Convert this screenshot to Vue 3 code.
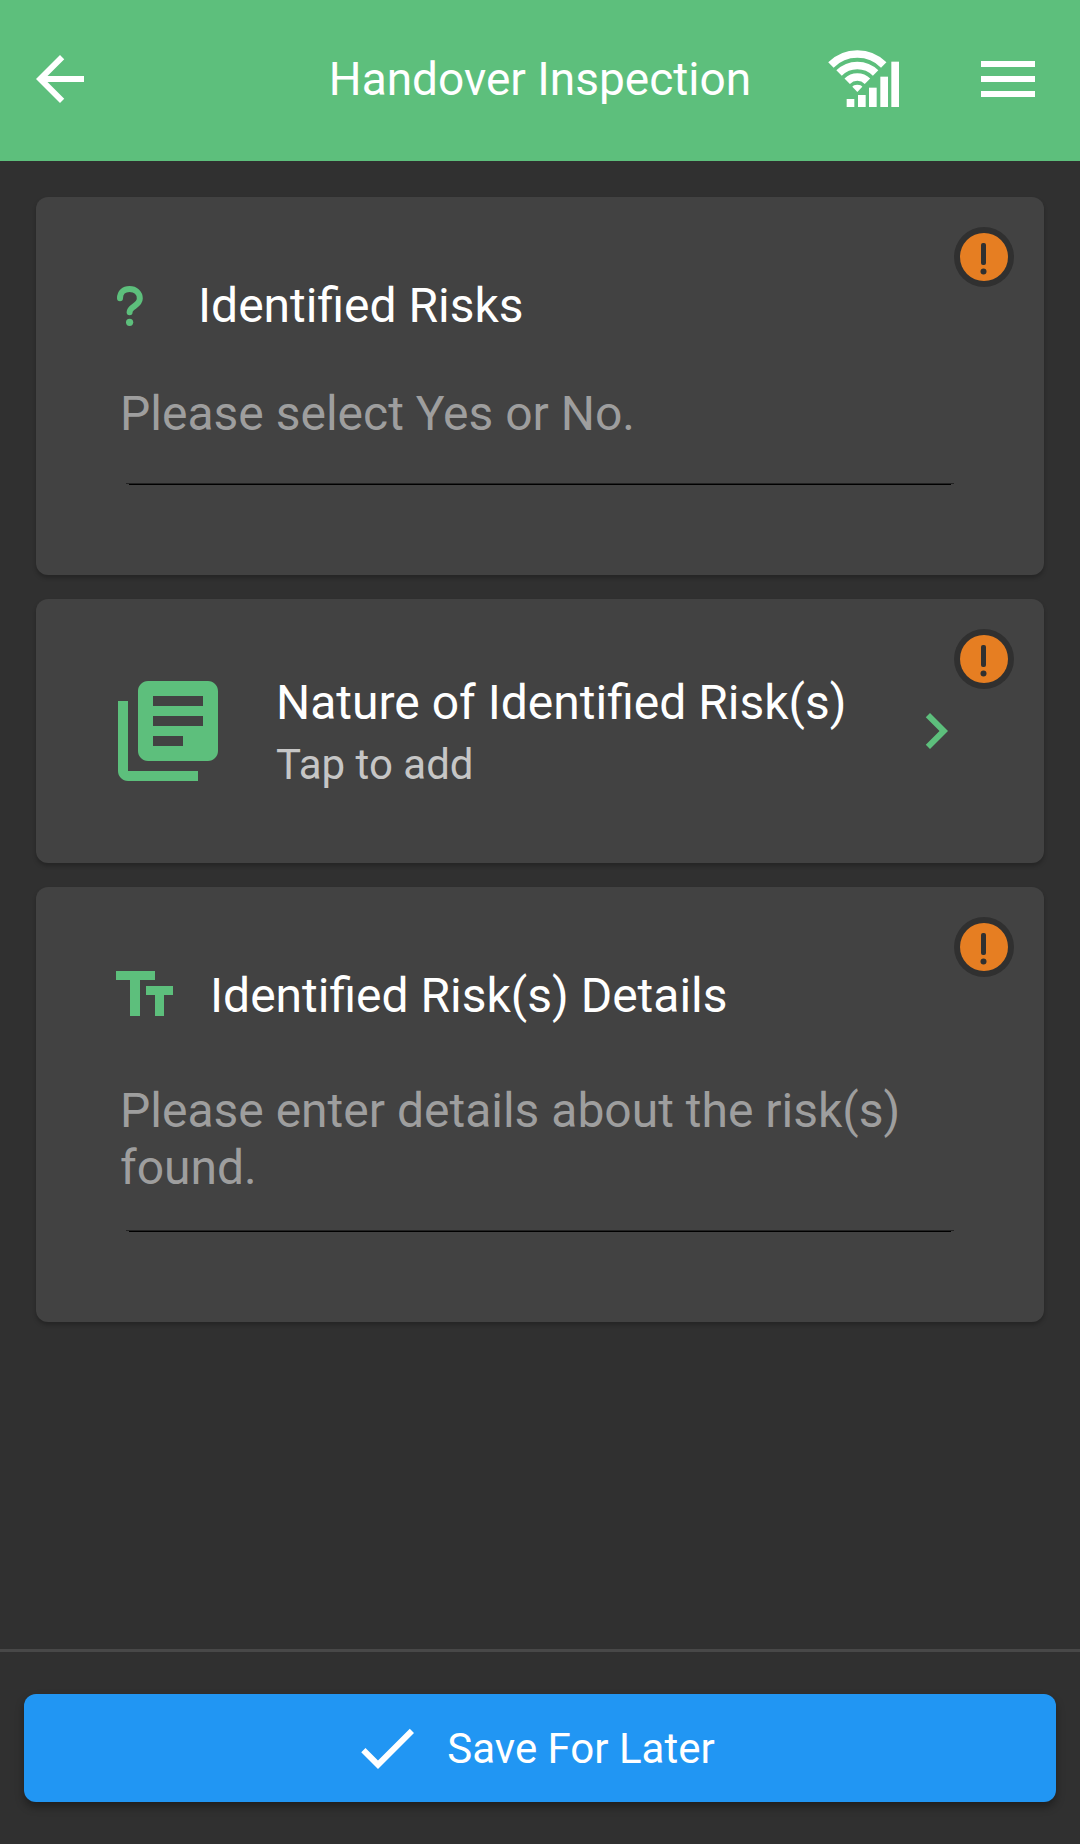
<script setup>
import { ref } from 'vue'

const risks = ref('')
const details = ref('')
</script>

<template>
  <div class="screen">
    <header class="bar">
      <button class="icon-button" type="button" aria-label="Back">
        <svg class="icon" viewBox="0 0 24 24"><path d="M20 11H7.83l5.59-5.59L12 4l-8 8 8 8 1.41-1.41L7.83 13H20v-2z" /></svg>
      </button>
      <h1 class="title">Handover Inspection</h1>
      <div class="actions">
        <svg class="signal" viewBox="25 60 213 177" role="img" aria-label="Signal">
          <g class="arcs">
            <path d="M33.8 104.8A112 112 0 0 1 192.2 104.8" />
            <path d="M58.2 129.2A77.5 77.5 0 0 1 167.8 129.2" />
            <path d="M82.6 153.6A43 43 0 0 1 143.4 153.6" />
          </g>
          <path d="M113 186 98 170Q101 164 113 164T128 170Z" />
          <rect x="81" y="207" width="23" height="24" />
          <rect x="115" y="195" width="23" height="36" />
          <rect x="148" y="173" width="23" height="58" />
          <rect x="182" y="140" width="23" height="91" />
          <rect x="215" y="95" width="23" height="136" />
        </svg>
        <button class="icon-button" type="button" aria-label="Menu">
          <svg class="icon" viewBox="0 0 24 24"><path d="M3 18h18v-2H3v2zm0-5h18v-2H3v2zm0-7v2h18V6H3z" /></svg>
        </button>
      </div>
    </header>

    <main class="list">
      <section class="card">
        <label class="heading" for="risks">
          <svg class="question" viewBox="-1 0 46 40" aria-hidden="true">
            <path class="hook" d="M3 12.300C3 6.500 7 3 12.500 3c6 0 10.300 3.800 10.300 9.600 0 7.200-10.200 7.800-10.200 13.600" />
            <circle cx="12.600" cy="36.300" r="3.600" />
          </svg>
          <span>Identified Risks</span>
        </label>
        <div class="field single">
          <input id="risks" v-model="risks" type="text" placeholder="Please select Yes or No." />
        </div>
        <svg class="badge" viewBox="0 0 60 60" role="img" aria-label="Required">
          <circle class="ring" cx="30" cy="30" r="30" />
          <circle class="disc" cx="30" cy="30" r="24" />
          <rect class="ring" x="27" y="16" width="5" height="22" rx="2" />
          <circle class="ring" cx="29.500" cy="44.500" r="3" />
        </svg>
      </section>

      <section class="card">
        <button class="entry" type="button">
          <svg class="library" viewBox="0 0 24 24" aria-hidden="true">
            <path d="M4 6H2v14c0 1.100.900 2 2 2h14v-2H4V6zm16-4H8c-1.100 0-2 .900-2 2v12c0 1.100.900 2 2 2h12c1.100 0 2-.900 2-2V4c0-1.100-.900-2-2-2zm-1 9H9V9h10v2zm-4 4H9v-2h6v2zm4-8H9V5h10v2z" />
          </svg>
          <span class="texts">
            <span class="name">Nature of Identified Risk(s)</span>
            <span class="hint">Tap to add</span>
          </span>
          <svg class="icon" viewBox="0 0 24 24" aria-hidden="true"><path d="M10 6 8.590 7.410 13.170 12l-4.580 4.590L10 18l6-6z" /></svg>
        </button>
        <svg class="badge" viewBox="0 0 60 60" role="img" aria-label="Required">
          <circle class="ring" cx="30" cy="30" r="30" />
          <circle class="disc" cx="30" cy="30" r="24" />
          <rect class="ring" x="27" y="16" width="5" height="22" rx="2" />
          <circle class="ring" cx="29.500" cy="44.500" r="3" />
        </svg>
      </section>

      <section class="card">
        <label class="heading" for="details">
          <svg class="letters" viewBox="0 0 58 49" aria-hidden="true">
            <rect width="39" height="9" />
            <rect x="14" width="10" height="45" />
            <rect x="30" y="15" width="27" height="9" />
            <rect x="39" y="15" width="9" height="30" />
          </svg>
          <span>Identified Risk(s) Details</span>
        </label>
        <div class="field multi">
          <textarea id="details" v-model="details" rows="2" placeholder="Please enter details about the risk(s) found."></textarea>
        </div>
        <svg class="badge" viewBox="0 0 60 60" role="img" aria-label="Required">
          <circle class="ring" cx="30" cy="30" r="30" />
          <circle class="disc" cx="30" cy="30" r="24" />
          <rect class="ring" x="27" y="16" width="5" height="22" rx="2" />
          <circle class="ring" cx="29.500" cy="44.500" r="3" />
        </svg>
      </section>
    </main>

    <footer class="footer">
      <button class="save" type="button">
        <svg class="icon" viewBox="0 0 24 24" aria-hidden="true"><path d="M9 16.170 4.830 12l-1.420 1.410L9 19 21 7l-1.410-1.410z" /></svg>
        <span>Save For Later</span>
      </button>
    </footer>
  </div>
</template>

<style>
body {
  margin: 0;
  background: #303030;
}
</style>

<style scoped>
.screen {
  display: flex;
  flex-direction: column;
  min-height: 100vh;
  background: #303030;
  color: #fff;
  font-family: Roboto, sans-serif;
  font-size: 48px;
  line-height: 57px;
}
.screen *,
.screen {
  box-sizing: border-box;
}
button {
  border: 0;
  padding: 0;
  background: none;
  color: inherit;
  font: inherit;
  cursor: pointer;
}
svg {
  display: block;
  flex: none;
  fill: currentColor;
}
.icon {
  width: 72px;
  height: 72px;
}
.bar {
  display: grid;
  grid-template-columns: 1fr auto 1fr;
  align-items: center;
  padding: 43px 36px 46px 24px;
  background: #5dbf7c;
}
.icon-button {
  display: block;
  width: 72px;
}
.title {
  margin: 0;
  padding-left: 12px;
  font-size: 46px;
  font-weight: 400;
  line-height: 57px;
}
.actions {
  display: flex;
  align-items: center;
  justify-content: flex-end;
  gap: 73px;
}
.signal {
  width: 71px;
  height: 59px;
}
.arcs {
  fill: none;
  stroke: currentColor;
  stroke-width: 23;
}
.list {
  display: flex;
  flex: 1;
  flex-direction: column;
  gap: 24px;
  padding: 36px;
}
.card {
  position: relative;
  border-radius: 12px;
  background: #424242;
  box-shadow: 0 3px 4px rgba(0, 0, 0, 0.24);
}
.heading {
  display: flex;
  align-items: center;
  gap: 36px;
  padding: 80px 80px 0;
}
.question,
.letters,
.library,
.entry .icon {
  color: #5dbf7c;
}
.question {
  width: 46px;
  height: 40px;
}
.hook {
  fill: none;
  stroke: currentColor;
  stroke-width: 6;
  stroke-linecap: round;
}
.letters {
  width: 58px;
  height: 49px;
}
.field {
  padding: 0 84px 90px;
}
.single {
  padding-top: 51px;
}
.multi {
  padding-top: 58px;
}
.field input,
.field textarea {
  display: block;
  width: 100%;
  margin: 0;
  border: 0;
  outline: 0;
  resize: none;
  overflow: hidden;
  color: #fff;
  font: inherit;
  background:
    linear-gradient(#000, #000) center bottom / calc(100% - 18px) 1px no-repeat,
    linear-gradient(#222, #222) center bottom 1px / calc(100% - 12px) 1px no-repeat;
}
.field input {
  height: 100px;
  padding: 0 0 43px;
}
.field textarea {
  height: 150px;
  padding: 0 0 36px;
}
.field ::placeholder {
  color: #9e9e9e;
  opacity: 1;
}
.badge {
  position: absolute;
  top: 30px;
  right: 30px;
  width: 60px;
  height: 60px;
}
.ring {
  fill: #303030;
}
.disc {
  fill: #e67e22;
}
.entry {
  display: flex;
  align-items: center;
  width: 100%;
  padding: 72px;
  text-align: left;
}
.library {
  width: 120px;
  height: 120px;
}
.texts {
  display: flex;
  flex: 1;
  flex-direction: column;
  gap: 9px;
  padding-left: 48px;
}
.hint {
  color: #c6c6c6;
  font-size: 42px;
  line-height: 49px;
}
.footer {
  padding: 42px 24px;
  border-top: 3px solid #484848;
}
.save {
  display: flex;
  align-items: center;
  justify-content: center;
  gap: 24px;
  width: 100%;
  padding: 18px 14px 18px 0;
  border-radius: 12px;
  background: #2196f3;
  box-shadow: 0 5px 8px rgba(0, 0, 0, 0.35);
  font-size: 42px;
  line-height: 49px;
}
</style>
